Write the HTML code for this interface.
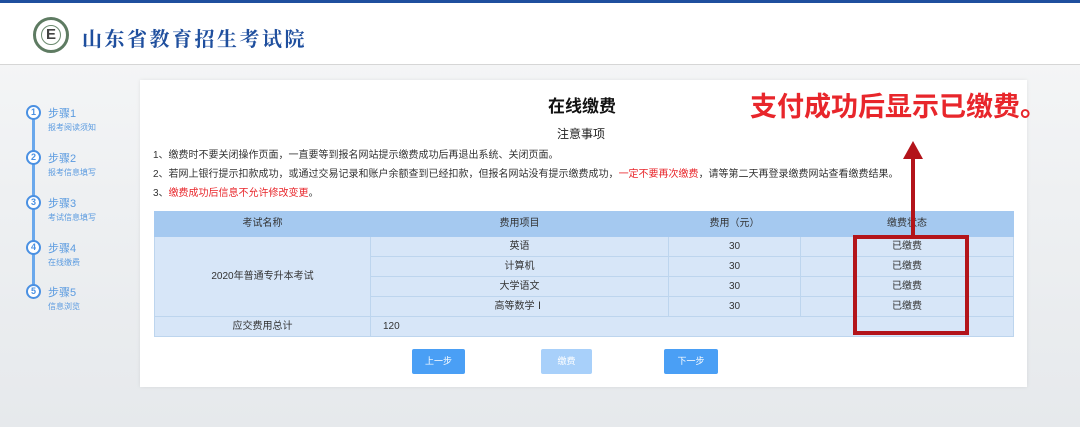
<!DOCTYPE html>
<html><head><meta charset="utf-8"><style>
*{margin:0;padding:0;box-sizing:border-box}
body{width:1080px;height:427px;overflow:hidden;position:relative;font-family:"Liberation Sans","Noto Sans CJK SC",sans-serif;background:linear-gradient(180deg,#f4f5f6 60px,#eef0f2 200px,#e6e9ec 427px)}
.top{position:absolute;left:0;top:0;width:1080px;height:3px;background:#1f4f9e}
.hdr{position:absolute;left:0;top:3px;width:1080px;height:62px;background:#fff;border-bottom:1px solid #d6d6d6}
.logo{position:absolute;left:33px;top:14px;width:36px;height:36px;border-radius:50%;border:3px solid #5e7b62;background:#fff}
.logo b{position:absolute;left:5px;top:5px;width:20px;height:20px;border-radius:50%;border:1px solid #6b8a6f;font:bold 15px "Liberation Sans",sans-serif;color:#444;text-align:center;line-height:18px}
.title{position:absolute;left:82px;top:20px;font:bold 20px "Noto Serif CJK SC",serif;color:#1f4f9e;letter-spacing:2.5px}
.line{position:absolute;left:32px;top:113px;width:3px;height:180px;background:#6aa8ec}
.st{position:absolute;left:26px;width:120px}
.st i{position:absolute;left:0;top:0;width:15px;height:15px;border-radius:50%;border:2px solid #4a90e2;background:#fff;font:bold 9px "Liberation Sans",sans-serif;color:#4a90e2;text-align:center;line-height:11px;font-style:normal}
.st .a{position:absolute;left:22px;top:0;font-size:11px;color:#5b9be0}
.st .b{position:absolute;left:22px;top:17px;font-size:8px;color:#5b9be0;white-space:nowrap}
.card{position:absolute;left:140px;top:80px;width:887px;height:307px;background:#fff;box-shadow:0 0 4px rgba(0,0,0,.08)}
.h1{position:absolute;left:548px;top:92px;font-size:17px;font-weight:bold;color:#111}
.h2{position:absolute;left:557px;top:125px;font-size:12px;color:#222}
.n{position:absolute;left:153px;font-size:10px;color:#333;white-space:nowrap}
.r{color:#e8262b}
table{position:absolute;left:154px;top:211px;width:860px;border-collapse:collapse;font-size:10px;color:#333;text-align:center}
td{border:1px solid #bdd5ee;height:20px;line-height:12px;padding:0;vertical-align:middle;background:#d7e6f8}
tr.th td{background:#a5c9f0;height:25px;border-color:#a5c9f0}
.btn{position:absolute;top:349px;height:25px;background:#4a9ff5;color:#fff;font-size:9px;text-align:center;line-height:25px;border-radius:2px}
.red{position:absolute;left:750px;top:85px;font-size:27px;font-weight:bold;color:#e8262b;white-space:nowrap}
.box{position:absolute;left:853px;top:235px;width:116px;height:100px;border:4px solid #b3141a}
.shaft{position:absolute;left:911px;top:150px;width:4px;height:86px;background:#b3141a}
.head{position:absolute;left:903px;top:141px;width:0;height:0;border-left:10px solid transparent;border-right:10px solid transparent;border-bottom:18px solid #b3141a}
</style></head><body>
<div class="top"></div>
<div class="hdr"><div class="logo"><b>E</b></div><div class="title">山东省教育招生考试院</div></div>
<div class="line"></div>
<div class="st" style="top:105px"><i>1</i><div class="a">步骤1</div><div class="b">报考阅读须知</div></div>
<div class="st" style="top:150px"><i>2</i><div class="a">步骤2</div><div class="b">报考信息填写</div></div>
<div class="st" style="top:195px"><i>3</i><div class="a">步骤3</div><div class="b">考试信息填写</div></div>
<div class="st" style="top:240px"><i>4</i><div class="a">步骤4</div><div class="b">在线缴费</div></div>
<div class="st" style="top:284px"><i>5</i><div class="a">步骤5</div><div class="b">信息浏览</div></div>
<div class="card"></div>
<div class="h1">在线缴费</div>
<div class="h2">注意事项</div>
<div class="n" style="top:146px">1、缴费时不要关闭操作页面，一直要等到报名网站提示缴费成功后再退出系统、关闭页面。</div>
<div class="n" style="top:165px">2、若网上银行提示扣款成功，或通过交易记录和账户余额查到已经扣款，但报名网站没有提示缴费成功，<span class="r">一定不要再次缴费</span>，请等第二天再登录缴费网站查看缴费结果。</div>
<div class="n" style="top:184px">3、<span class="r">缴费成功后信息不允许修改变更</span>。</div>
<table>
<tr class="th"><td style="width:216px">考试名称</td><td style="width:298px">费用项目</td><td style="width:132px">费用（元）</td><td>缴费状态</td></tr>
<tr><td rowspan="4">2020年普通专升本考试</td><td>英语</td><td>30</td><td>已缴费</td></tr>
<tr><td>计算机</td><td>30</td><td>已缴费</td></tr>
<tr><td>大学语文</td><td>30</td><td>已缴费</td></tr>
<tr><td>高等数学Ⅰ</td><td>30</td><td>已缴费</td></tr>
<tr><td style="height:17px">应交费用总计</td><td colspan="3" style="text-align:left;padding-left:12px">120</td></tr>
</table>
<div class="btn" style="left:412px;width:53px">上一步</div>
<div class="btn" style="left:541px;width:51px;background:#a8d0fa">缴费</div>
<div class="btn" style="left:664px;width:54px">下一步</div>
<div class="red">支付成功后显示已缴费。</div>
<div class="box"></div>
<div class="shaft"></div>
<div class="head"></div>
</body></html>
